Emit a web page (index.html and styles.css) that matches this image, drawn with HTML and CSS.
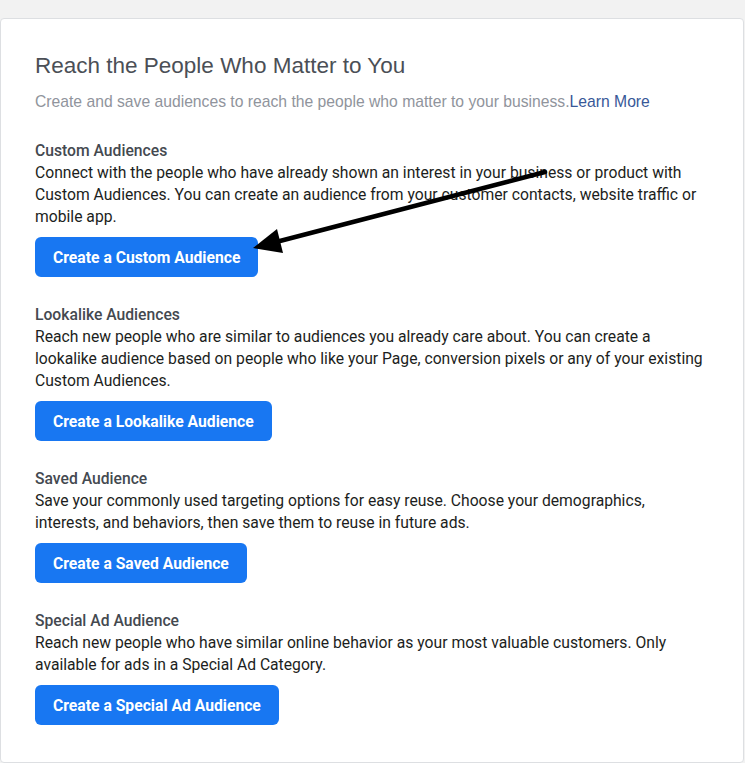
FILE: index.html
```html
<!DOCTYPE html>
<html>
<head>
    <title>Audiences</title>
    <link rel="stylesheet" href="styles.css">
</head>
<body>
    <div class="card">
        <h1 class="card-title">Reach the People Who Matter to You</h1>
        <p class="card-intro">Create and save audiences to reach the people who matter to your business.<a href="#" class="learn-more">Learn More</a></p>

        <div class="section">
            <div class="section-title">Custom Audiences</div>
            <div class="section-text">Connect with the people who have already shown an interest in your business or product with Custom Audiences. You can create an audience from your customer contacts, website traffic or mobile app.</div>
            <button class="btn">Create a Custom Audience</button>
        </div>

        <div class="section">
            <div class="section-title">Lookalike Audiences</div>
            <div class="section-text">Reach new people who are similar to audiences you already care about. You can create a lookalike audience based on people who like your Page, conversion pixels or any of your existing Custom Audiences.</div>
            <button class="btn">Create a Lookalike Audience</button>
        </div>

        <div class="section">
            <div class="section-title">Saved Audience</div>
            <div class="section-text">Save your commonly used targeting options for easy reuse. Choose your demographics, interests, and behaviors, then save them to reuse in future ads.</div>
            <button class="btn">Create a Saved Audience</button>
        </div>

        <div class="section">
            <div class="section-title">Special Ad Audience</div>
            <div class="section-text">Reach new people who have similar online behavior as your most valuable customers. Only available for ads in a Special Ad Category.</div>
            <button class="btn">Create a Special Ad Audience</button>
        </div>

        <!-- annotation arrow drawn over the card -->
        <svg class="arrow" width="745" height="763" viewBox="0 0 745 763">
            <line x1="545" y1="172" x2="276" y2="242" stroke="#000" stroke-width="4.5" stroke-linecap="round"/>
            <polygon points="253,248 277,229 283,253" fill="#000"/>
        </svg>
    </div>
</body>
</html>
```

FILE: styles.css
```css
html, body {
    margin: 0;
    padding: 0;
    background: #f2f2f2;
}
body {
    padding-top: 18px;
}
.card {
    position: relative;
    width: 744px;
    box-sizing: border-box;
    background: #fff;
    border: 1px solid #dddfe2;
    border-radius: 4px;
    padding: 33px 35px 36px 34px;
    min-height: 745px;
}
.card-title {
    margin: 0;
    font-family: 'Liberation Sans', Arial, sans-serif;
    font-weight: normal;
    font-size: 22.5px;
    line-height: 28px;
    color: #4b4f56;
}
.card-intro {
    margin: 12px 0 0 0;
    font-family: 'Liberation Sans', Arial, sans-serif;
    font-size: 15.7px;
    line-height: 20px;
    color: #90949c;
}
.learn-more {
    color: #385898;
    text-decoration: none;
}
.section {
    margin-top: 28px;
    font-family: Roboto, 'Noto Sans', sans-serif;
}
.section + .section {
    margin-top: 27px;
}
.section-title {
    font-size: 15.7px;
    font-weight: 500;
    line-height: 22px;
    color: #444950;
}
.section-text {
    font-size: 15.7px;
    line-height: 22px;
    color: #1c1e21;
}
.btn {
    display: block;
    margin-top: 9px;
    height: 40px;
    padding: 0 18px;
    border: none;
    border-radius: 6px;
    background: #1877f2;
    color: #fff;
    font-family: Roboto, 'Noto Sans', sans-serif;
    font-weight: bold;
    font-size: 15.7px;
    cursor: pointer;
}
.arrow {
    position: absolute;
    top: -19px;
    left: -1px;
    pointer-events: none;
}
```
